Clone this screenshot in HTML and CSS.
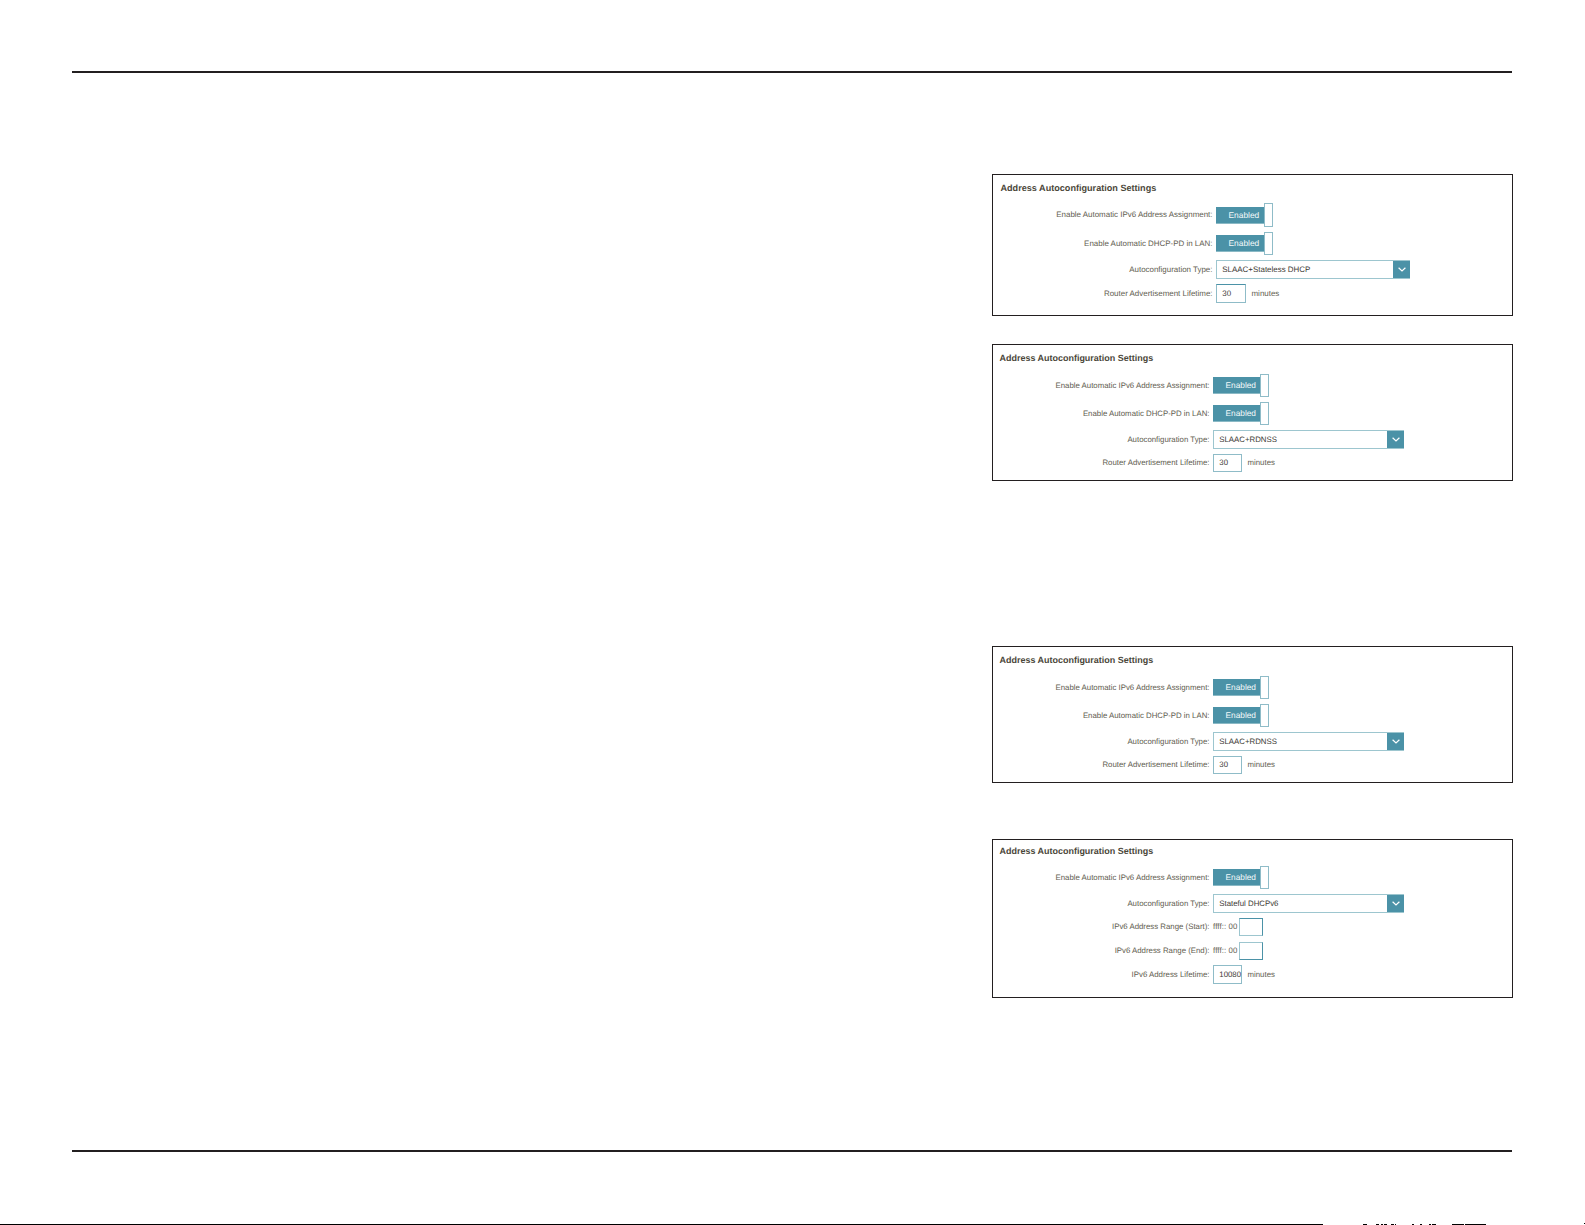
FILE: index.html
```html
<!DOCTYPE html>
<html lang="en">
<head>
  <meta charset="UTF-8" />
  <meta name="viewport" content="width=device-width, initial-scale=1" />
  <title>Address Autoconfiguration Settings</title>
  <link rel="stylesheet" href="styles.css">
</head>
<body>

  <main class="page">

    <section class="panel large">
      <h2>Address Autoconfiguration Settings</h2>
      <div class="row toggle-row">
        <label>Enable Automatic IPv6 Address Assignment:</label>
        <div class="toggle"><span>Enabled</span><i></i></div>
      </div>
      <div class="row toggle-row">
        <label>Enable Automatic DHCP-PD in LAN:</label>
        <div class="toggle"><span>Enabled</span><i></i></div>
      </div>
      <div class="row">
        <label>Autoconfiguration Type:</label>
        <div class="select"><span>SLAAC+Stateless DHCP</span><b><svg viewBox="0 0 8 5"><path d="M0.6 0.8 L4 4 L7.4 0.8" /></svg></b></div>
      </div>
      <div class="row input-row">
        <label>Router Advertisement Lifetime:</label>
        <div class="box">30</div>
        <span class="unit">minutes</span>
      </div>
    </section>

    <section class="panel second">
      <h2>Address Autoconfiguration Settings</h2>
      <div class="row toggle-row">
        <label>Enable Automatic IPv6 Address Assignment:</label>
        <div class="toggle"><span>Enabled</span><i></i></div>
      </div>
      <div class="row toggle-row">
        <label>Enable Automatic DHCP-PD in LAN:</label>
        <div class="toggle"><span>Enabled</span><i></i></div>
      </div>
      <div class="row">
        <label>Autoconfiguration Type:</label>
        <div class="select"><span>SLAAC+RDNSS</span><b><svg viewBox="0 0 8 5"><path d="M0.6 0.8 L4 4 L7.4 0.8" /></svg></b></div>
      </div>
      <div class="row input-row">
        <label>Router Advertisement Lifetime:</label>
        <div class="box">30</div>
        <span class="unit">minutes</span>
      </div>
    </section>

    <section class="panel third">
      <h2>Address Autoconfiguration Settings</h2>
      <div class="row toggle-row">
        <label>Enable Automatic IPv6 Address Assignment:</label>
        <div class="toggle"><span>Enabled</span><i></i></div>
      </div>
      <div class="row toggle-row">
        <label>Enable Automatic DHCP-PD in LAN:</label>
        <div class="toggle"><span>Enabled</span><i></i></div>
      </div>
      <div class="row">
        <label>Autoconfiguration Type:</label>
        <div class="select"><span>SLAAC+RDNSS</span><b><svg viewBox="0 0 8 5"><path d="M0.6 0.8 L4 4 L7.4 0.8" /></svg></b></div>
      </div>
      <div class="row input-row">
        <label>Router Advertisement Lifetime:</label>
        <div class="box">30</div>
        <span class="unit">minutes</span>
      </div>
    </section>

    <section class="panel stateful">
      <h2>Address Autoconfiguration Settings</h2>
      <div class="row toggle-row">
        <label>Enable Automatic IPv6 Address Assignment:</label>
        <div class="toggle"><span>Enabled</span><i></i></div>
      </div>
      <div class="row">
        <label>Autoconfiguration Type:</label>
        <div class="select"><span>Stateful DHCPv6</span><b><svg viewBox="0 0 8 5"><path d="M0.6 0.8 L4 4 L7.4 0.8" /></svg></b></div>
      </div>
      <div class="row range-row">
        <label>IPv6 Address Range (Start):</label>
        <span class="prefix">ffff:: 00</span>
        <div class="box short"></div>
      </div>
      <div class="row range-row last">
        <label>IPv6 Address Range (End):</label>
        <span class="prefix">ffff:: 00</span>
        <div class="box short"></div>
      </div>
      <div class="row">
        <label>IPv6 Address Lifetime:</label>
        <div class="box">10080</div>
        <span class="unit">minutes</span>
      </div>
    </section>

  </main>

  <!-- page edge -->
  <svg class="edge" viewBox="0 0 1585 2" shape-rendering="crispEdges">
    <path d="M0 1.5H1323M1363 1.5H1367M1376 1.5H1379M1381 1.5H1383M1384 1.5H1387M1391 1.5H1394M1395 1.5H1396M1412 1.5H1414M1420 1.5H1422M1429 1.5H1431M1432 1.5H1436M1452 1.5H1464M1465 1.5H1486M1584 .5H1585" />
  </svg>

</body>
</html>
```

FILE: styles.css
```css
* {
  box-sizing: border-box;
}
body {
  margin: 0;
  width: 1585px;
  height: 1225px;
  display: flex;
  flex-direction: column;
  overflow: hidden;
  background: #fff;
  font-family: "Liberation Sans", Arial, sans-serif;
  text-rendering: geometricPrecision;
}
.page {
  width: 1440px;
  height: 1081px;
  margin: 71px 0 0 72px;
  padding-top: 101px;
  border-top: 2px solid #231f20;
  border-bottom: 2px solid #231f20;
}
.panel {
  width: 521px;
  height: 137px;
  margin-left: 920px;
  border: 1px solid #231f20;
  padding: 8px 0 0 6.5px;
  font-size: 7.83px;
  color: #625d50;
}
.panel h2 {
  margin: 0 0 11px;
  font-size: 8.97px;
  line-height: 10px;
  color: #4a4639;
}
.row {
  display: flex;
  align-items: center;
  height: 19px;
  margin-bottom: 5px;
  line-height: 10px;
  white-space: nowrap;
}
.toggle-row {
  height: 23px;
}
.input-row,
.range-row {
  height: 18px;
}
label {
  width: 210px;
  margin-right: 3.5px;
  text-align: right;
}
.toggle {
  display: flex;
  align-items: center;
  height: 100%;
}
.toggle span {
  width: 47px;
  height: 17px;
  padding-left: 12.5px;
  background: #4b92a7;
  border-bottom: 1px solid #8ab9c5;
  color: #f4fafb;
  font-size: 8.3px;
  line-height: 17px;
}
.toggle i {
  width: 9px;
  height: 100%;
  border: 1px solid #8fbcc8;
}
.select {
  display: flex;
  width: 191px;
  height: 19px;
  border: 1px solid #9dc6cf;
  border-right: 0;
  color: #3d3a35;
}
.select span {
  flex: 1;
  padding-left: 5.3px;
  line-height: 17px;
}
.select b {
  display: flex;
  align-items: center;
  justify-content: center;
  width: 17px;
  background: #4b92a7;
}
.select svg {
  width: 8px;
  height: 5px;
  fill: none;
  stroke: #fff;
  stroke-width: 1.2;
}
.box {
  width: 29px;
  height: 100%;
  padding-left: 5.3px;
  border: 1px solid #8fbcc8;
  color: #3d3a35;
  line-height: 17px;
}
.input-row .box {
  line-height: 15px;
}
.unit {
  margin-left: 5.5px;
}
.prefix {
  width: 26px;
  letter-spacing: 0.1px;
}
.box.short {
  width: 24px;
  border-color: #4b92a7 #4b92a7 #9dc6cf #9dc6cf;
}

/* first panel is drawn slightly bigger */
.large {
  height: 142px;
  font-size: 7.95px;
  padding-left: 7.5px;
}
.large h2 {
  margin-bottom: 10px;
  font-size: 9.1px;
}
.large label {
  width: 212px;
}
.large h2 + .toggle-row {
  height: 24px;
}
.large .toggle span {
  width: 48px;
  font-size: 8.4px;
}
.large .select {
  width: 194px;
}
.large .input-row {
  height: 19px;
}
.large .box {
  width: 30px;
  border-top-color: #4b92a7;
  line-height: 17px;
}

.second {
  margin-top: 28px;
}
.third {
  margin-top: 165px;
}
.stateful {
  height: 159px;
  margin-top: 56px;
  padding-top: 6px;
}
.stateful h2 {
  margin-bottom: 10px;
}
.stateful .range-row {
  margin-bottom: 6px;
}
.stateful .last {
  margin-bottom: 5px;
}
.last .box.short {
  border-color: #9dc6cf #4b92a7 #4b92a7 #9dc6cf;
}

.edge {
  width: 1585px;
  height: 2px;
  margin-top: auto;
  stroke: #000;
  stroke-width: 1;
}
```
